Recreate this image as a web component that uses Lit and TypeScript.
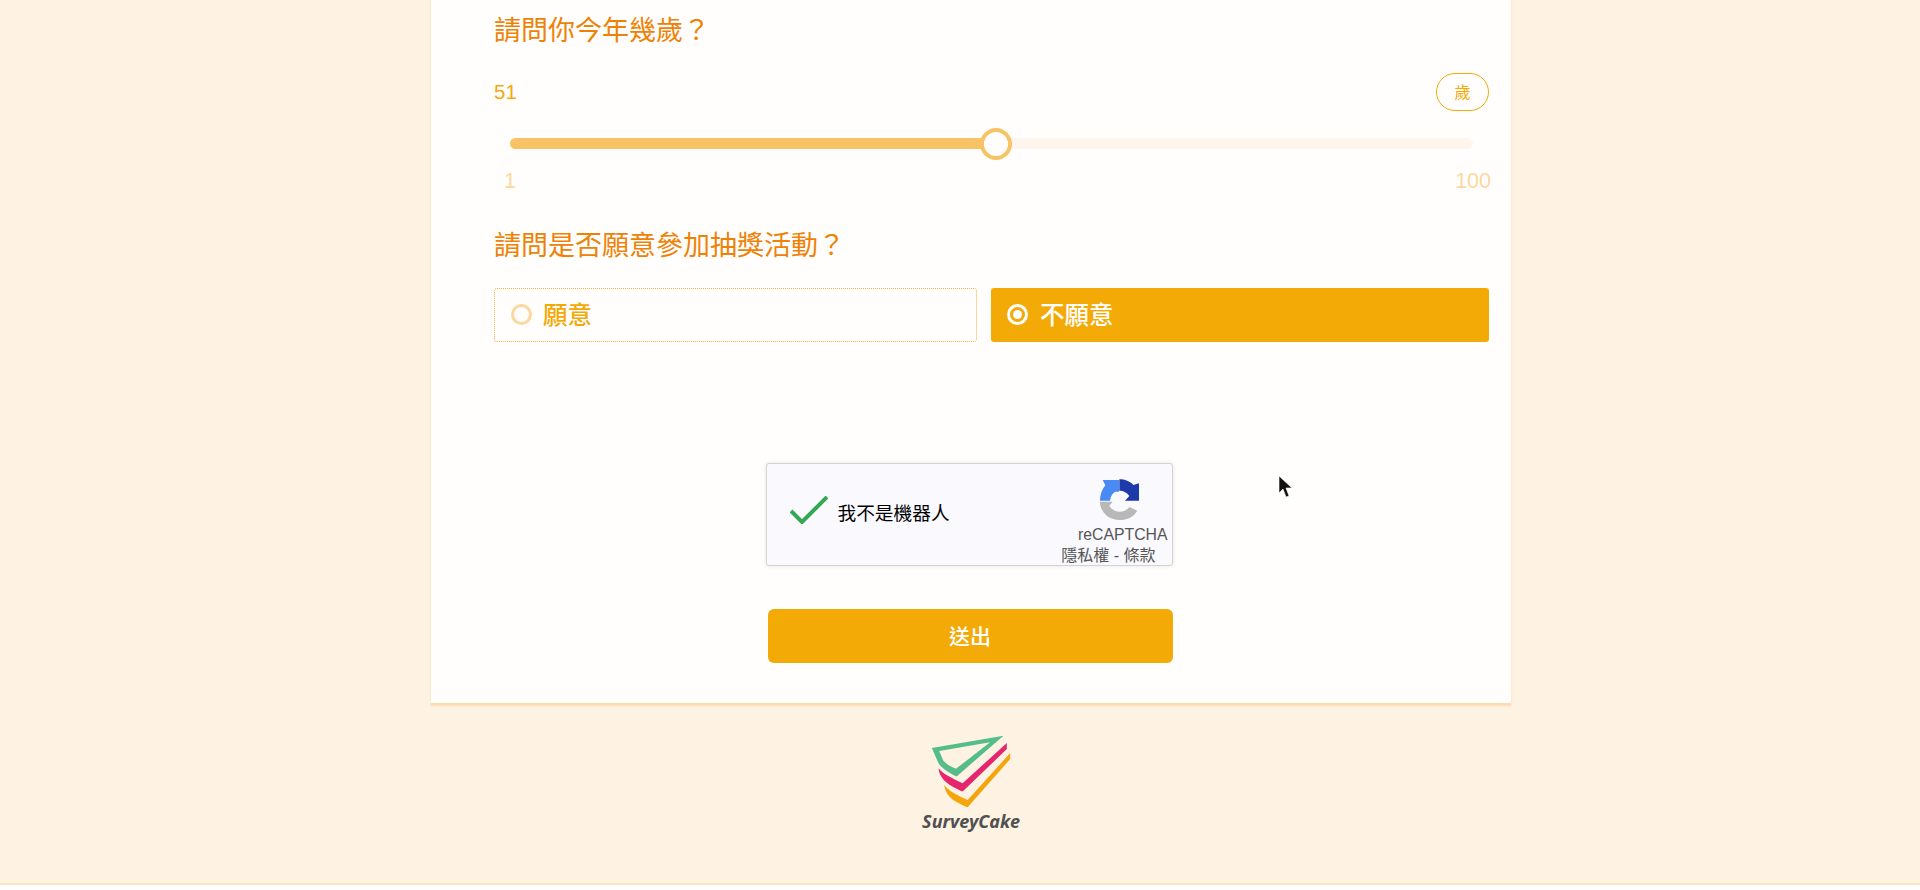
import { LitElement, html, css } from "lit";
import { customElement } from "lit/decorators.js";

const AGE = 51;
const pct = ((AGE - 1) / 99) * 100;

@customElement("app-root")
export class AppRoot extends LitElement {
  static styles = css`
    :host {
      display: block;
      position: relative;
      height: 890px;
      overflow: hidden;
      background: #fff;
      font-family: "Liberation Sans", "Noto Sans CJK TC", sans-serif;
    }
    .page {
      height: 885px;
      box-sizing: border-box;
      background: #fef2e3;
      border-bottom: 2px solid #fbe3c4;
      padding-left: 22px;
      display: flex;
      flex-direction: column;
      align-items: center;
    }
    .card {
      width: 1080px;
      box-sizing: border-box;
      background: #fffefd;
      border-bottom: 2px solid #fbdcb0;
      box-shadow: 0 1px 2px rgba(245, 190, 110, 0.4);
      padding-bottom: 40px;
    }
    .questions {
      padding: 0 22px 0 63px;
    }
    .title {
      height: 62px;
      line-height: 62px;
      font-size: 27px;
      color: #ee8207;
    }
    .title.second {
      height: 40px;
      line-height: 40px;
      margin-top: 33px;
    }
    .head {
      margin-top: 11px;
      height: 38px;
      display: flex;
      justify-content: space-between;
      align-items: center;
    }
    .value {
      font-size: 20.5px;
      color: #f4a90e;
    }
    .unit {
      width: 53px;
      height: 38px;
      box-sizing: border-box;
      border: 1px solid #f3aa06;
      border-radius: 19px;
      display: flex;
      align-items: center;
      justify-content: center;
      padding-bottom: 2px;
      font-size: 16px;
      color: #f3aa06;
    }
    .track {
      position: relative;
      margin: 27px 16px 0 16px;
      height: 11px;
      border-radius: 6px;
      background: #fef5ec;
    }
    .fill {
      height: 100%;
      border-radius: 6px;
      background: #f7c365;
    }
    .thumb {
      position: absolute;
      top: 50%;
      width: 32px;
      height: 32px;
      box-sizing: border-box;
      transform: translate(-50%, -50%);
      border-radius: 50%;
      border: 4px solid #f7c365;
      background: #fffefd;
    }
    .scale {
      margin: 20px -2px 0 10px;
      display: flex;
      justify-content: space-between;
      font-size: 21.5px;
      line-height: 24px;
      color: #fcd89e;
    }
    .options {
      margin-top: 22px;
      display: grid;
      grid-template-columns: 483px 1fr;
      gap: 14px;
    }
    .option {
      height: 54px;
      box-sizing: border-box;
      border-radius: 3px;
      display: flex;
      align-items: center;
      gap: 11px;
      padding-left: 16px;
      padding-bottom: 3px;
      font-size: 24.5px;
      font-weight: 500;
    }
    .option.off {
      border: 1px dotted #eeb53c;
      color: #f3aa06;
    }
    .option.on {
      background: #f3aa06;
      color: #fff;
      padding-left: 16px;
      gap: 12px;
    }
    .ring {
      width: 21px;
      height: 21px;
      margin-top: 2px;
      box-sizing: border-box;
      border-radius: 50%;
      border: 3px solid #fcd89e;
    }
    .on .ring {
      border-color: #fff;
      display: flex;
      align-items: center;
      justify-content: center;
    }
    .on .ring::after {
      content: "";
      width: 9px;
      height: 9px;
      border-radius: 50%;
      background: #fff;
    }
    .submit-area {
      margin-top: 121px;
      padding-right: 2px;
      display: flex;
      flex-direction: column;
      align-items: center;
    }
    .captcha {
      width: 407px;
      height: 103px;
      margin-right: 2px;
      box-sizing: border-box;
      position: relative;
      background: #f9f9fe;
      border: 1px solid #d3d3d3;
      border-radius: 3px;
      box-shadow: 0 0 4px rgba(0, 0, 0, 0.1);
      padding: 32px 0 0 23px;
      display: flex;
      gap: 10px;
      color: #000;
    }
    .check {
      width: 38px;
      height: 28px;
    }
    .cap-label {
      font-size: 18.7px;
      line-height: 38px;
      margin-top: -1px;
    }
    .cap-logo {
      position: absolute;
      left: 323px;
      top: 6px;
      width: 60px;
      height: 60px;
    }
    .cap-name {
      position: absolute;
      right: 4px;
      top: 60px;
      font-size: 15.8px;
      line-height: 22px;
      color: #555;
    }
    .cap-links {
      position: absolute;
      right: 16px;
      top: 81px;
      font-size: 16px;
      line-height: 22px;
      color: #555;
    }
    .send {
      margin-top: 43px;
      width: 405px;
      height: 54px;
      border-radius: 6px;
      background: #f3aa06;
      color: #fff;
      display: flex;
      align-items: center;
      justify-content: center;
      padding-bottom: 2px;
      box-sizing: border-box;
      font-size: 21px;
      font-weight: 500;
    }
    .brand {
      margin-top: 28px;
      display: flex;
      flex-direction: column;
      align-items: center;
    }
    .brand svg {
      width: 84px;
      height: 77px;
    }
    .brand-name {
      margin-top: -1px;
      font-family: "Noto Sans", sans-serif;
      font-style: italic;
      font-weight: 700;
      font-size: 18px;
      line-height: 24px;
      color: #505050;
    }
    .cursor {
      position: absolute;
      left: 1278px;
      top: 475px;
      width: 17px;
      height: 24px;
      filter: blur(0.6px);
    }
  `;

  render() {
    return html`
      <div class="page">
        <div class="card">
          <div class="questions">
            <div class="title">請問你今年幾歲？</div>
            <div class="head">
              <span class="value">${AGE}</span>
              <span class="unit">歲</span>
            </div>
            <div class="track">
              <div class="fill" style="width:${pct}%"></div>
              <div class="thumb" style="left:${pct}%"></div>
            </div>
            <div class="scale"><span>1</span><span>100</span></div>
            <div class="title second">請問是否願意參加抽獎活動？</div>
            <div class="options">
              <div class="option off"><span class="ring"></span>願意</div>
              <div class="option on"><span class="ring"></span>不願意</div>
            </div>
          </div>
          <div class="submit-area">
            <div class="captcha">
              <svg class="check" viewBox="0 0 38 28">
                <path d="M1 15 L12 26 L37 1" fill="none" stroke="#34a853" stroke-width="4" />
              </svg>
              <span class="cap-label">我不是機器人</span>
              <svg class="cap-logo" viewBox="0 0 180 180">
                <path fill="#4a8af4" d="M30 92 C30 74 36 58 46 46 L38 30 H87 V65 H76 C68 69 62 78 60 92 Z" />
                <path fill="#1c3aa9" d="M88 28 C104 28 120 34 130 45 L147 40 V92 H105 L118 78 C112 68 100 62 88 62 Z" />
                <path fill="#b8b8b8" d="M30 95 H68 L58 107 C64 118 76 125 88 125 C102 125 112 119 118 111 L142 122 C132 140 112 150 88 150 C56 150 30 126 30 95 Z" />
              </svg>
              <span class="cap-name">reCAPTCHA</span>
              <span class="cap-links">隱私權 - 條款</span>
            </div>
            <div class="send">送出</div>
          </div>
        </div>
        <div class="brand">
          <svg viewBox="30 10 250 230">
            <path fill-rule="evenodd" fill="#55bd8a" d="M38 55 L252 18 L112 140 C90 128 70 118 58 100 Z M60 64 L212 38 L110 117 C94 110 80 102 72 92 Z" />
            <path fill="#e5256d" d="M58 115 C70 132 100 145 130 160 L262 40 L262 58 L130 185 C100 170 62 155 58 115 Z" />
            <path fill="#f4a50c" d="M75 165 C90 185 120 198 145 210 L272 70 L272 88 L145 232 C115 218 80 205 75 165 Z" />
          </svg>
          <div class="brand-name">SurveyCake</div>
        </div>
      </div>
      <svg class="cursor" viewBox="0 0 17 24">
        <path d="M1 1 V18 L5 14 L8 22 L11 21 L8 13 H14 Z" fill="#111" stroke="#fff" stroke-width="0.6" />
      </svg>
    `;
  }
}
